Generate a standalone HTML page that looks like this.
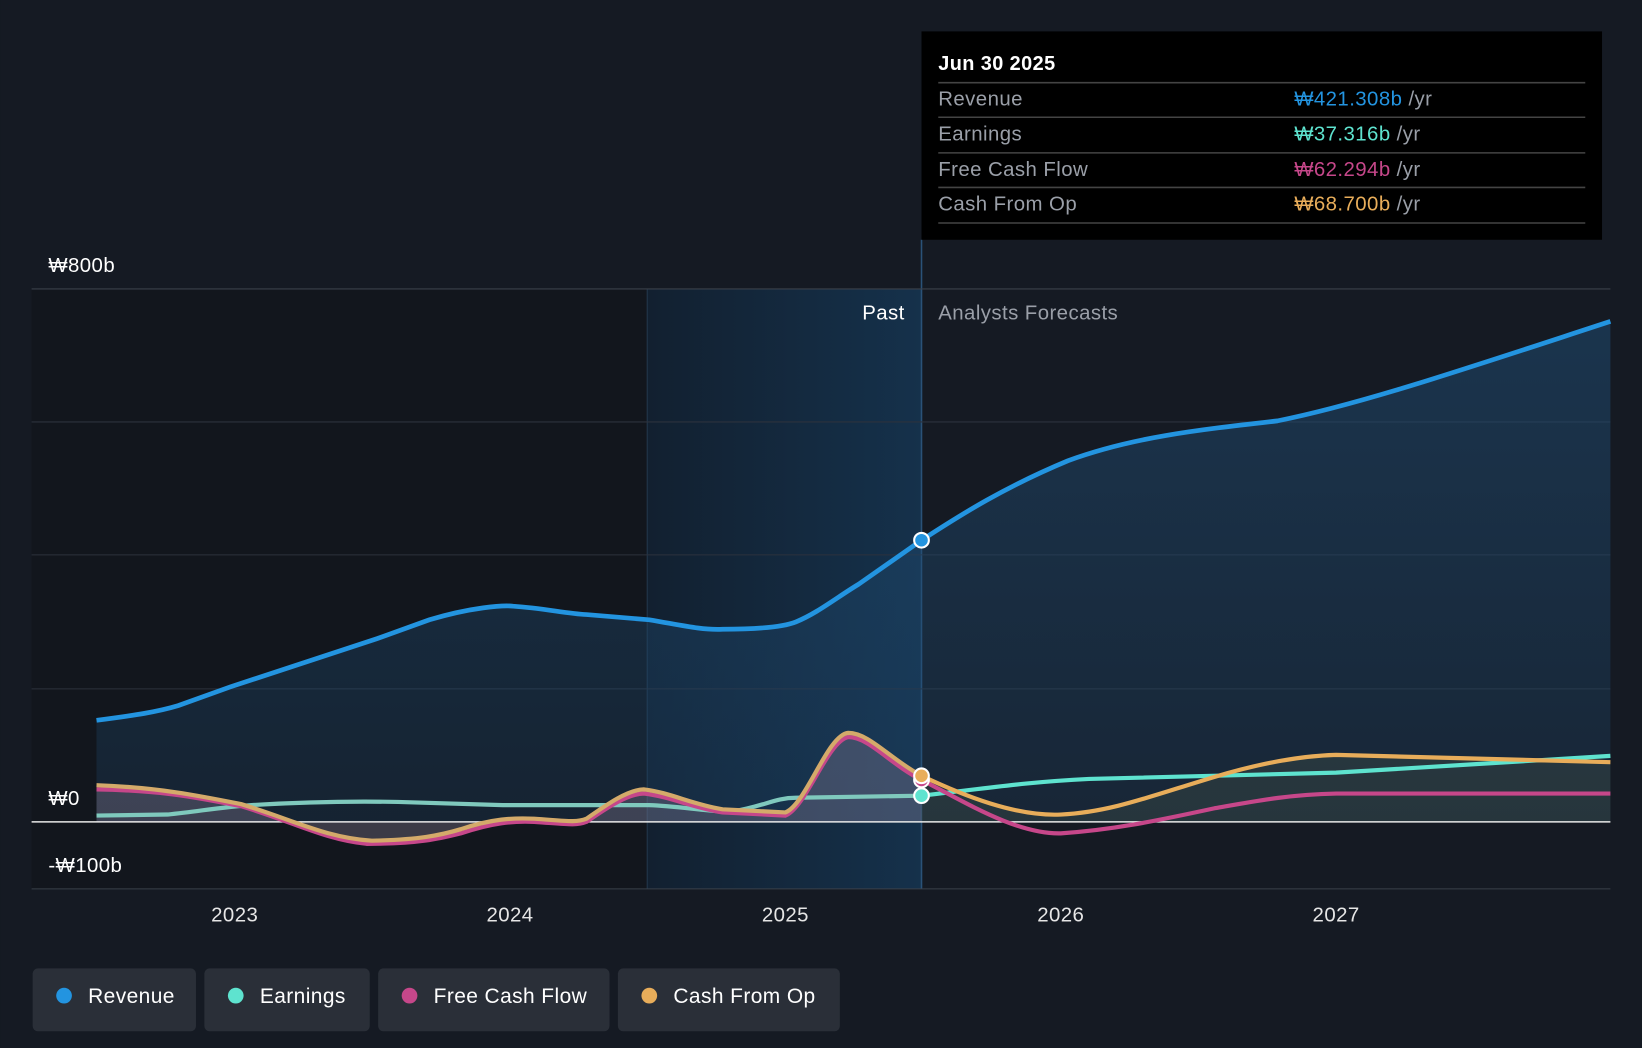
<!DOCTYPE html>
<html><head><meta charset="utf-8"><style>
html,body{margin:0;padding:0;background:#151a23;}
svg{display:block;font-family:"Liberation Sans",Roboto,sans-serif;}
text{letter-spacing:0.4px;}
</style></head><body>
<svg width="1642" height="1048" viewBox="0 0 1568 1001" xmlns="http://www.w3.org/2000/svg">
<defs>
<linearGradient id="pastg" x1="0" x2="1" y1="0" y2="0">
<stop offset="0" stop-color="#122030"/><stop offset="1" stop-color="#15314b"/></linearGradient>
<linearGradient id="revg" x1="0" x2="0" y1="0" y2="1">
<stop offset="0" stop-color="#1f4a70" stop-opacity="0.55"/><stop offset="1" stop-color="#1f4a70" stop-opacity="0.25"/></linearGradient>
</defs>
<rect width="1568" height="1001" fill="#151a23"/>
<rect x="30" y="276" width="588" height="573" fill="#12161d"/>
<rect x="618" y="276" width="262" height="573" fill="url(#pastg)"/>
<line x1="618" y1="276" x2="618" y2="849" stroke="#23384c" stroke-width="1"/>
<line x1="880" y1="229" x2="880" y2="849" stroke="#2a5278" stroke-width="1.5"/>
<g stroke="#2c323d" stroke-width="1">
<line x1="30" y1="276" x2="1538" y2="276" stroke="#3a404a"/>
<line x1="30" y1="403" x2="1538" y2="403"/>
<line x1="30" y1="530" x2="1538" y2="530"/>
<line x1="30" y1="658" x2="1538" y2="658"/>
<line x1="30" y1="849" x2="1538" y2="849" stroke="#3a404a"/>
</g>
<path d="M92,688 C130,683 150,680 170,674 L220,656 L360,610 L410,592 C450,580 480,578 490,579 C520,581 540,586 560,587 L620,592 C650,597 670,602 690,601 C730,601 750,598 760,594 C780,586 800,570 820,558 L880,516 C920,490 960,465 1020,440 C1080,418 1140,411 1220,402 C1300,386 1400,352 1538,307 L1538,785 L92,785 Z" fill="url(#revg)"/>
<path d="M92,752 C150,752 190,760 230,768 C280,783 310,800 355,803 C400,802 420,798 440,792 C470,782 490,781 510,782 C540,784 550,786 560,782 C580,768 600,754 615,754 C640,757 660,768 690,773 L750,776 C770,768 790,702 810,700 C830,700 850,725 880,741 L880,785 L92,785Z" fill="#8a7f95" fill-opacity="0.35"/>
<path d="M880,741 C920,760 970,780 1013,778 C1060,776 1100,760 1160,742 C1200,730 1240,722 1276,721 L1538,728 L1538,785 L880,785Z" fill="#3a4a45" fill-opacity="0.45"/>
<line x1="30" y1="785" x2="1538" y2="785" stroke="#e8e8e8" stroke-width="1.5"/>
<path d="M92,688 C130,683 150,680 170,674 L220,656 L360,610 L410,592 C450,580 480,578 490,579 C520,581 540,586 560,587 L620,592 C650,597 670,602 690,601 C730,601 750,598 760,594 C780,586 800,570 820,558 L880,516 C920,490 960,465 1020,440 C1080,418 1140,411 1220,402 C1300,386 1400,352 1538,307" fill="none" stroke="#2394e0" stroke-width="4.5"/>
<path d="M92,779 L160,778 C190,775 210,771 240,769 C290,766 330,765 380,766 L480,769 L620,769 C650,770 680,776 700,775 C730,770 740,762 760,762 L880,760" fill="none" stroke="#7fc9bd" stroke-width="4"/>
<path d="M880,760 C950,752 980,747 1040,744 L1276,738 L1538,722" fill="none" stroke="#5ee3cf" stroke-width="4"/>
<path d="M92,754 C150,755 180,760 230,770 C280,785 310,802 350,806 C400,806 420,801 440,796 C470,786 490,784 510,785 C540,787 550,789 560,785 C580,771 600,758 615,758 C640,761 660,771 690,776 L750,779 C770,771 790,708 810,704 C830,704 850,730 880,745 C920,765 970,797 1013,796 C1060,793 1100,785 1160,772 C1200,765 1230,759 1276,758 L1538,758" fill="none" stroke="#c6478a" stroke-width="4"/>
<path d="M92,750 C150,752 190,760 230,768 C280,783 310,800 355,803 C400,802 420,798 440,792 C470,782 490,781 510,782 C540,784 550,786 560,782 C580,768 600,754 615,754 C640,757 660,768 690,773 L750,776 C770,768 790,702 810,700 C830,700 850,725 880,741" fill="none" stroke="#d4aa6a" stroke-width="4"/>
<path d="M880,741 C920,760 970,780 1013,778 C1060,776 1100,760 1160,742 C1200,730 1240,722 1276,721 L1538,728" fill="none" stroke="#e8ad5a" stroke-width="4"/>
<circle cx="880" cy="516" r="7" fill="#2394e0" stroke="#fff" stroke-width="2"/>
<circle cx="880" cy="760" r="7" fill="#5ee3cf" stroke="#fff" stroke-width="2"/>
<circle cx="880" cy="745" r="7" fill="#c6478a" stroke="#fff" stroke-width="2"/>
<circle cx="880" cy="741" r="7" fill="#e8ad5a" stroke="#fff" stroke-width="2"/>
<g font-size="19.5" fill="#fff">
<text x="46" y="260">₩800b</text>
<text x="46" y="769">₩0</text>
<text x="46" y="833">-₩100b</text>
<text x="864" y="305" text-anchor="end">Past</text>
<text x="896" y="305" fill="#9a9fa8">Analysts Forecasts</text>
</g>
<g font-size="19.5" fill="#e6e6e6" text-anchor="middle">
<text x="224" y="880">2023</text><text x="487" y="880">2024</text><text x="750" y="880">2025</text><text x="1013" y="880">2026</text><text x="1276" y="880">2027</text>
</g>
<rect x="880" y="30" width="650" height="199" fill="#000"/>
<text x="896" y="67" font-size="19" font-weight="bold" fill="#fff">Jun 30 2025</text>
<g stroke="#444" stroke-width="1.5">
<line x1="896" y1="79" x2="1514" y2="79"/><line x1="896" y1="112" x2="1514" y2="112"/><line x1="896" y1="146" x2="1514" y2="146"/><line x1="896" y1="179" x2="1514" y2="179"/><line x1="896" y1="213" x2="1514" y2="213"/>
</g>
<g font-size="19.5" fill="#9a9fa8">
<text x="896" y="101">Revenue</text><text x="896" y="134">Earnings</text><text x="896" y="168">Free Cash Flow</text><text x="896" y="201">Cash From Op</text>
<text x="1236" y="101"><tspan fill="#2394e0">₩421.308b</tspan> /yr</text>
<text x="1236" y="134"><tspan fill="#5ee3cf">₩37.316b</tspan> /yr</text>
<text x="1236" y="168"><tspan fill="#c6478a">₩62.294b</tspan> /yr</text>
<text x="1236" y="201"><tspan fill="#e8ad5a">₩68.700b</tspan> /yr</text>
</g>
<g font-size="20" fill="#fff">
<rect x="31" y="925" width="156" height="60" rx="5" fill="#2a2f38"/>
<circle cx="61" cy="951" r="7.5" fill="#2394e0"/><text x="84" y="958">Revenue</text>
<rect x="195" y="925" width="158" height="60" rx="5" fill="#2a2f38"/>
<circle cx="225" cy="951" r="7.5" fill="#5ee3cf"/><text x="248" y="958">Earnings</text>
<rect x="361" y="925" width="221" height="60" rx="5" fill="#2a2f38"/>
<circle cx="391" cy="951" r="7.5" fill="#c6478a"/><text x="414" y="958">Free Cash Flow</text>
<rect x="590" y="925" width="212" height="60" rx="5" fill="#2a2f38"/>
<circle cx="620" cy="951" r="7.5" fill="#e8ad5a"/><text x="643" y="958">Cash From Op</text>
</g>
</svg>
</body></html>
